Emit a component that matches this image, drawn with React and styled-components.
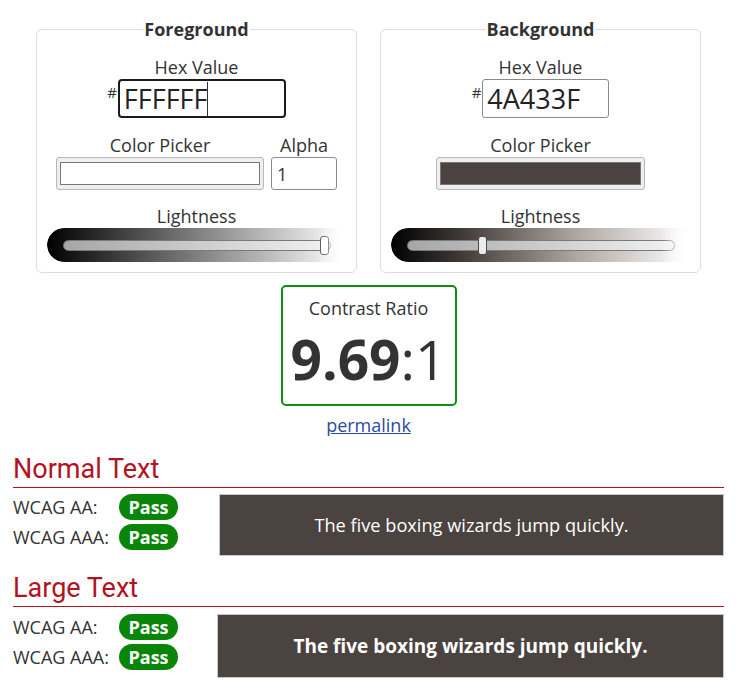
import React from "react";
import styled, { createGlobalStyle } from "styled-components";

const Global = createGlobalStyle`
  html, body { margin: 0; padding: 0; background: #fff; }
  body {
    font-family: "Open Sans", "DejaVu Sans", sans-serif;
    color: #333;
    font-size: 18px;
  }
  * { box-sizing: border-box; }
`;

const Page = styled.main`
  width: 736px;
  padding: 18px 12px 0 13px;
`;

const Panels = styled.div`
  display: flex;
  justify-content: center;
  gap: 23px;
`;

const Fieldset = styled.fieldset`
  width: 321px;
  margin: 0;
  padding: 0 0 10px;
  border: 1px solid #dcdcdc;
  border-radius: 6px;
  display: flex;
  flex-direction: column;
  align-items: center;
`;

const Legend = styled.legend`
  margin: 0 auto;
  padding: 0 1px;
  font-weight: 700;
  font-size: 18px;
  line-height: 23px;
  color: #333;
`;

const Label = styled.div`
  font-size: 18px;
  line-height: 24px;
  text-align: center;
  margin-top: ${(p) => p.$mt || 0}px;
`;

const HexRow = styled.div`
  display: flex;
  align-items: flex-start;
`;

const Hash = styled.span`
  font-size: 15px;
  line-height: 15px;
  margin-top: 6px;
  margin-right: 1px;
  color: #333;
`;

const HexBox = styled.div`
  width: ${(p) => p.$w}px;
  height: 39px;
  display: flex;
  align-items: center;
  padding-left: 4px;
  font-size: 27px;
  color: #222;
  background: #fff;
  border: ${(p) => (p.$focused ? "2px solid #1b1b1b" : "1px solid #8a8a8a")};
  border-radius: ${(p) => (p.$focused ? 4 : 3)}px;
`;

const Caret = styled.span`
  display: inline-block;
  width: 1px;
  height: 34px;
  background: #333;
`;

const PickerRow = styled.div`
  display: flex;
  gap: 7px;
`;

const PickerCol = styled.div`
  display: flex;
  flex-direction: column;
  align-items: center;
`;

const Picker = styled.div`
  width: ${(p) => p.$w}px;
  height: 33px;
  padding: 4px 3px;
  background: #efefef;
  border: 1px solid #b8b8b8;
  border-radius: 3px;
`;

const Swatch = styled.div`
  width: 100%;
  height: 100%;
  background: ${(p) => p.$color};
  border: 1px solid #777;
`;

const AlphaBox = styled.div`
  width: 66px;
  height: 33px;
  display: flex;
  align-items: center;
  padding-left: 5px;
  font-size: 18px;
  border: 1px solid #8a8a8a;
  border-radius: 3px;
`;

const Band = styled.div`
  width: 300px;
  height: 34px;
  border-radius: 17px 0 0 17px;
  background: ${(p) => p.$gradient};
  -webkit-mask-image: linear-gradient(to right, #000 90%, transparent 100%);
  mask-image: linear-gradient(to right, #000 90%, transparent 100%);
  display: flex;
  align-items: center;
  padding-left: 16px;
`;

const Track = styled.div`
  position: relative;
  width: 268px;
  height: 11px;
  border: 1px solid #7a7a7a;
  border-radius: 6px;
  background: linear-gradient(to right, #a6a6a6, #f2f2f2);
`;

const Thumb = styled.div`
  position: absolute;
  top: -5px;
  width: 9px;
  height: 19px;
  margin-left: -4px;
  background: #f0f0f0;
  border: 1.5px solid #4a4a4a;
  border-radius: 3px;
`;

const RatioBox = styled.section`
  width: 176px;
  height: 121px;
  margin: 12px auto 0;
  padding-top: 9px;
  border: 2px solid #118c11;
  border-radius: 5px;
  display: flex;
  flex-direction: column;
  align-items: center;
`;

const Ratio = styled.div`
  margin-top: 9px;
  font-size: 55px;
  line-height: 60px;
  color: #333;
  white-space: nowrap;
  b { font-weight: 700; }
`;

const Permalink = styled.a`
  display: block;
  width: max-content;
  margin: 7px auto 0;
  font-size: 18px;
  line-height: 24px;
  color: #2c4aa3;
  text-decoration: underline;
`;

const Heading = styled.h2`
  margin: ${(p) => p.$mt}px 0 0;
  padding-bottom: 3px;
  font-family: Roboto, "Liberation Sans", sans-serif;
  font-weight: 400;
  font-size: 27px;
  line-height: 30px;
  color: #b3131f;
  border-bottom: 1px solid #b3131f;
`;

const ResultBody = styled.div`
  display: flex;
  margin-top: ${(p) => p.$mt}px;
`;

const Checks = styled.div`
  width: ${(p) => p.$w}px;
  display: flex;
  flex-direction: column;
  gap: 4px;
`;

const CheckRow = styled.div`
  display: flex;
  align-items: center;
  height: 26px;
`;

const CheckLabel = styled.span`
  width: 106px;
  font-size: 18px;
  color: #333;
`;

const Badge = styled.span`
  width: 59px;
  height: 26px;
  border-radius: 13px;
  background: #098609;
  color: #fff;
  font-weight: 700;
  font-size: 18px;
  display: flex;
  align-items: center;
  justify-content: center;
`;

const Sample = styled.div`
  flex: 1;
  height: ${(p) => p.$h}px;
  background: #4a433f;
  border: 1px solid #c8c8c8;
  color: #fff;
  display: flex;
  align-items: center;
  justify-content: center;
  font-size: ${(p) => (p.$large ? "19px" : "18.2px")};
  font-weight: ${(p) => (p.$large ? 700 : 400)};
`;

function Slider({ gradient, pct, light }) {
  return (
    <Band $gradient={gradient}>
      <Track>
        <Thumb style={{ left: `${pct}%`, background: light ? "#fff" : "#ececec" }} />
      </Track>
    </Band>
  );
}

function Results({ title, mt, bodyMt, large, h, leftW }) {
  return (
    <>
      <Heading $mt={mt}>{title}</Heading>
      <ResultBody $mt={bodyMt}>
        <Checks $w={leftW}>
          <CheckRow>
            <CheckLabel>WCAG AA:</CheckLabel>
            <Badge>Pass</Badge>
          </CheckRow>
          <CheckRow>
            <CheckLabel>WCAG AAA:</CheckLabel>
            <Badge>Pass</Badge>
          </CheckRow>
        </Checks>
        <Sample $large={large} $h={h}>
          The five boxing wizards jump quickly.
        </Sample>
      </ResultBody>
    </>
  );
}

export default function App() {
  return (
    <Page>
      <Global />
      <Panels>
        <Fieldset>
          <Legend>Foreground</Legend>
          <Label $mt={14}>Hex Value</Label>
          <HexRow>
            <Hash>#</Hash>
            <HexBox $w={168} $focused>
              FFFFFF
              <Caret />
            </HexBox>
          </HexRow>
          <PickerRow>
            <PickerCol>
              <Label $mt={15}>Color Picker</Label>
              <Picker $w={208}>
                <Swatch $color="#ffffff" />
              </Picker>
            </PickerCol>
            <PickerCol>
              <Label $mt={15}>Alpha</Label>
              <AlphaBox>1</AlphaBox>
            </PickerCol>
          </PickerRow>
          <Label $mt={14}>Lightness</Label>
          <Slider gradient="linear-gradient(to right, #000 0%, #fff 100%)" pct={98} light />
        </Fieldset>
        <Fieldset>
          <Legend>Background</Legend>
          <Label $mt={14}>Hex Value</Label>
          <HexRow>
            <Hash>#</Hash>
            <HexBox $w={127}>4A433F</HexBox>
          </HexRow>
          <PickerCol>
            <Label $mt={15}>Color Picker</Label>
            <Picker $w={209}>
              <Swatch $color="#4a433f" />
            </Picker>
          </PickerCol>
          <Label $mt={14}>Lightness</Label>
          <Slider
            gradient="linear-gradient(to right, #000 0%, #4a433f 27%, #b0a7a1 62%, #fff 100%)"
            pct={28}
          />
        </Fieldset>
      </Panels>

      <RatioBox>
        <Label>Contrast Ratio</Label>
        <Ratio>
          <b>9.69</b>:1
        </Ratio>
      </RatioBox>
      <Permalink href="#">permalink</Permalink>

      <Results title="Normal Text" mt={17} bodyMt={6} h={62} leftW={206} />
      <Results title="Large Text" mt={17} bodyMt={7} h={64} leftW={204} large />
    </Page>
  );
}
